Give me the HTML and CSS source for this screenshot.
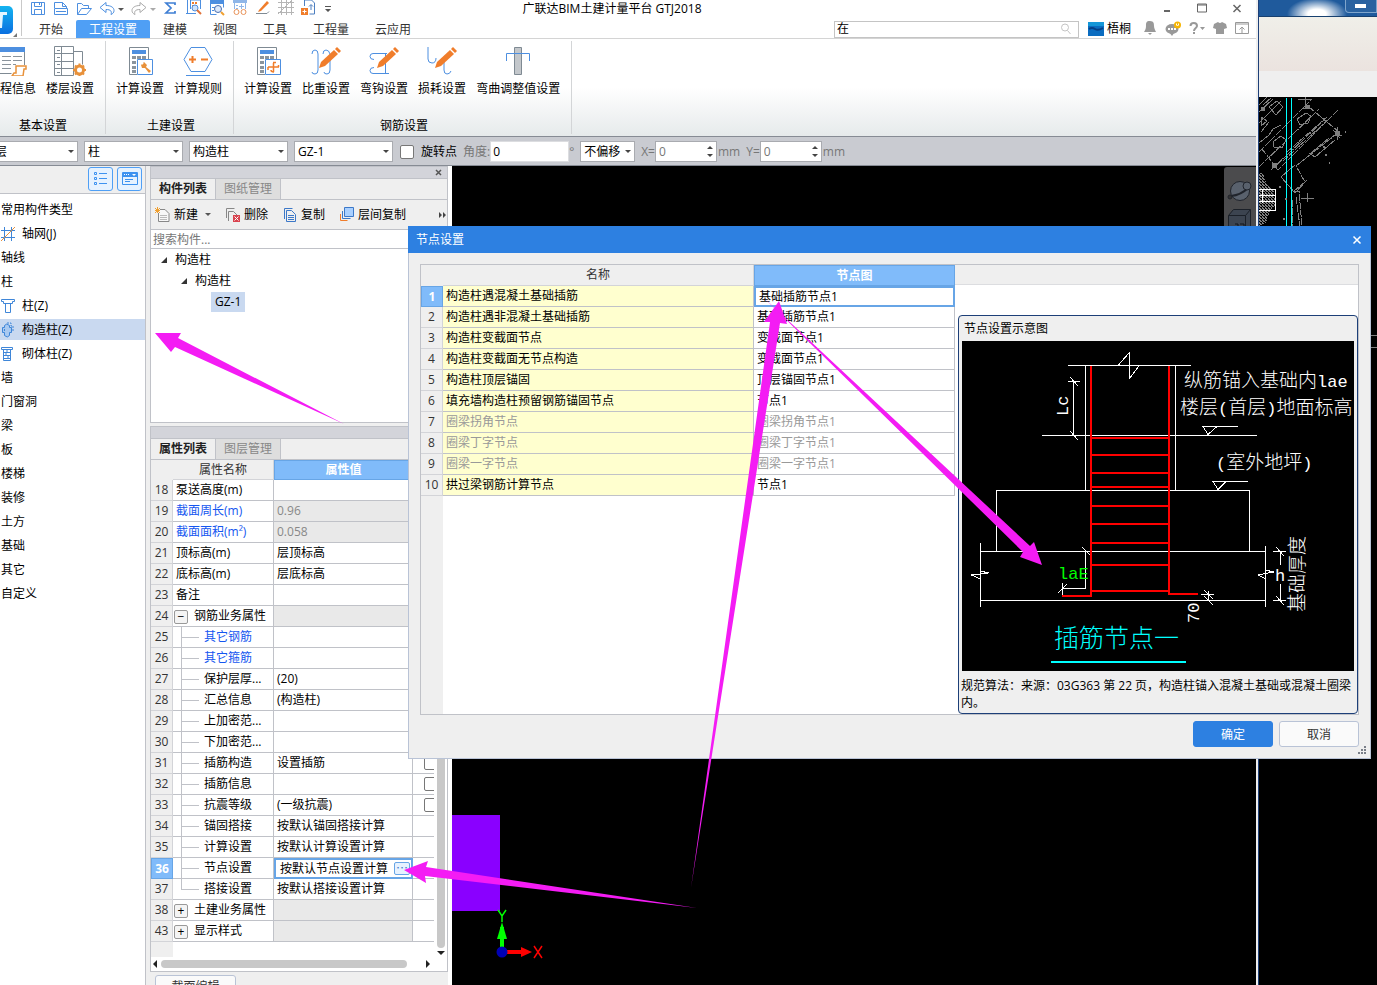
FILE: index.html
```html
<!DOCTYPE html>
<html lang="zh-CN">
<head>
    <meta charset="UTF-8">
    <title>广联达BIM土建计量平台 GTJ2018</title>
    <meta name="viewport" content="width=device-width, initial-scale=1">
    <link rel="stylesheet" href="styles.css">
</head>
<body>
<svg class="defs" aria-hidden="true">
    <symbol id="i-calc" viewBox="0 0 30 30">
        <path d="M4.500 1.500h19v13M12 28.500H4.500v-27" fill="none" stroke="#7f8a93"/>
        <path d="M7 4h14v4H7z" fill="#4d8fe0"/>
        <path d="M7 10h4v3H7zM12 10h4v3h-4zM17 10h4v3h-4zM7 15h4v3H7zM7 20h4v3H7zM7 24h4v3H7z" fill="#8b949c"/>
    </symbol>
    <symbol id="i-pencil" viewBox="0 0 30 30">
        <path d="M8 22l2-6L23 4l4 4L14 20z" fill="#f07d2b"/>
        <path d="M24 3l2-2 4 4-2 2z" fill="#f07d2b"/>
    </symbol>
</svg>

<div class="screen">
    <div class="app">
        <header class="header">
            <div class="logo">
                <svg width="22" height="40" viewBox="0 0 22 40">
                    <defs><linearGradient id="lg" x2="0" y2="1"><stop offset="0" stop-color="#14b4f0"/><stop offset="1" stop-color="#0a6fe0"/></linearGradient></defs>
                    <rect x="-16" y="6" width="29" height="28" rx="5" fill="url(#lg)"/>
                    <path d="M0 12h7v3H3l-1 13H0z" fill="#e6f6ff"/>
                    <path d="M17 33v4h-4z" fill="#777"/>
                    <path d="M21.500 0v36" stroke="#c9c9c9"/>
                </svg>
            </div>
            <div class="header-main">
                <div class="titlebar">
                    <div class="quick">
                        <button title="保存"><svg width="16" height="18" viewBox="0 0 16 18" fill="none" stroke="#4d8fe0"><path d="M1.500 2.500h13v12h-13zM4.500 2.500v4h7v-4M4.500 14.500v-5h7v5M9.500 3v2"/></svg></button>
                        <button title="打印"><svg width="16" height="18" viewBox="0 0 16 18" fill="none" stroke="#4d8fe0"><path d="M1.500 8V2.500h8l4 4V8M1.500 14.500v-6h13v6zM9.500 2.500v4h4M3 11.500h10"/></svg></button>
                        <button title="打开"><svg width="16" height="18" viewBox="0 0 16 18" fill="none" stroke="#4d8fe0"><path d="M1.500 14.500v-11h4l2 2h5v3M1.500 14.500l4-6h10l-5 6z"/></svg></button>
                        <button title="撤销"><svg width="16" height="18" viewBox="0 0 16 18" fill="none" stroke="#4d8fe0"><path d="M1 7.500l6-5v3c5 0 8 2 8 5 0 2-1 3-3 4 1-3 0-5-5-5v3z"/></svg><i class="caret"></i></button>
                        <button title="恢复"><svg width="16" height="18" viewBox="0 0 16 18" fill="none" stroke="#aaa"><path d="M15 7.500l-6-5v3c-5 0-8 2-8 5 0 2 1 3 3 4-1-3 0-5 5-5v3z"/></svg><i class="caret dim"></i></button>
                        <button title="汇总计算"><svg width="16" height="18" viewBox="0 0 16 18" fill="none" stroke="#3f7fd4" stroke-width="1.700"><path d="M12 5V3H3l5 5-5 5h9v-2"/></svg></button>
                        <button title="查看"><svg width="16" height="18" viewBox="0 0 16 18" fill="none" stroke="#4d8fe0"><path d="M0 13.500h10M1.500 13V0M4.500 9V0h10v9"/><path d="M6 2h2v2H6zM9 2h2v2H9zM6 5h2v2H6z" fill="#f07d2b" stroke="none"/><circle cx="9" cy="8" r="3" fill="#cfe2fa"/><path d="M11 10l4 4" stroke="#e0723a" stroke-width="2"/></svg></button>
                        <button title="查询"><svg width="16" height="18" viewBox="0 0 16 18" fill="none" stroke="#4d8fe0"><path d="M1.500 14.500V1.500h13v6M1.500 14.500h6M3 7.500h3M3 10.500h2"/><path d="M1 0h14v4H1z" fill="#4d8fe0" stroke="none"/><circle cx="9" cy="9" r="3.500" fill="#dce9fb" stroke="#4a6fb0"/><path d="M12 12l3 3" stroke="#f0a030" stroke-width="2"/></svg></button>
                        <button title="核对"><svg width="16" height="18" viewBox="0 0 16 18" fill="none" stroke="#8fb6e8"><path d="M1 0h14v3H1z" fill="#8fb6e8" stroke="none"/><path d="M2.500 9V1.500h11V9M7 6.500h5M9.500 4v5M4 5.500h2M4 8.500h2"/><circle cx="4.500" cy="12" r="2.500" stroke="#e8935a"/><circle cx="11.500" cy="12" r="2.500" stroke="#e8935a"/></svg></button>
                        <button title="绘制"><svg width="16" height="18" viewBox="0 0 16 18"><path d="M4 10l8-9 2 2-8 8-3 1z" fill="#f07d2b"/><path d="M1 13.500h11l2-2" fill="none" stroke="#7f8a93"/></svg></button>
                        <button title="轴网"><svg width="16" height="18" viewBox="0 0 16 18" fill="none" stroke="#b5b5b5"><path d="M3.500 0v15M8.500 0v15M13.500 0v15M0 2.500h16M0 7.500h16M0 12.500h16M0 14L14 0"/></svg></button>
                        <button title="导出"><svg width="16" height="18" viewBox="0 0 16 18" fill="none" stroke="#4d7fc0"><path d="M3.500 6V0h7l3 3v11h-5M8 6.500l2-2 2 2M10 5v5"/><path d="M0 8h7v7H0z" fill="#f07d2b" stroke="none"/><path d="M3.500 9.500v4M1.500 11.500h4" stroke="#fff"/></svg></button>
                        <button title="自定义"><svg width="8" height="18" viewBox="0 0 8 18"><path d="M1 6h6v1H1zM1 9h6l-3 3z" fill="#555"/></svg></button>
                    </div>
                    <h1 class="title">广联达BIM土建计量平台 GTJ2018</h1>
                    <div class="winbtns">
                        <button title="最小化"><svg width="10" height="12"><path d="M2 9h6v2H2z" fill="#666"/></svg></button>
                        <button title="最大化"><svg width="10" height="12"><path d="M.5 3h9v8h-9zM.5 4h9" fill="none" stroke="#666"/></svg></button>
                        <button title="关闭"><svg width="10" height="12"><path d="M1.500 4l7 7M8.500 4l-7 7" stroke="#666" stroke-width="1.500"/></svg></button>
                    </div>
                </div>
                <div class="menubar">
                    <nav class="tabs">
                        <a href="#">开始</a>
                        <a href="#" class="active">工程设置</a>
                        <a href="#">建模</a>
                        <a href="#">视图</a>
                        <a href="#">工具</a>
                        <a href="#">工程量</a>
                        <a href="#">云应用</a>
                    </nav>
                    <label class="search">
                        <input type="text" value="在" aria-label="搜索">
                        <svg width="14" height="14" viewBox="0 0 14 14" fill="none" stroke="#c4c4c4"><circle cx="6" cy="5.500" r="3.500"/><path d="M8.500 8.500l3 3.500"/></svg>
                    </label>
                    <div class="user">
                        <svg width="16" height="14" viewBox="0 0 16 14"><path d="M0 0h16v14H0z" fill="#0a6cc0"/><path d="M0 0h16v4H0z" fill="#1496d8"/><path d="M1 7q3-2 6 0t8-1" fill="none" stroke="#053f86" stroke-width="2"/></svg>
                        <span>梧桐</span>
                    </div>
                    <div class="tools">
                        <button title="通知"><svg width="14" height="16" viewBox="0 0 14 16" fill="#999"><path d="M7 0c4 0 4 3 4 5s1 4 2 6H1c1-2 2-3 2-6s0-5 4-5zM5 12h4l-2 2z"/></svg></button>
                        <button title="消息"><svg width="16" height="16" viewBox="0 0 16 16"><ellipse cx="7" cy="8" rx="6.500" ry="5" fill="#999"/><path d="M4 11l3 4 2-3z" fill="#999"/><path d="M3 7h2v2H3zM6 7h2v2H6zM9 7h2v2H9z" fill="#fff"/><circle cx="12.500" cy="4" r="3.500" fill="#f7b500"/><path d="M11.500 2.500v1.500q1 2 2 0V2.500" fill="none" stroke="#fff"/></svg></button>
                        <button title="帮助"><svg width="16" height="16" viewBox="0 0 16 16"><path d="M1.500 5c0-4 6.500-4 6.500 0 0 2-3 2-3 5" fill="none" stroke="#999" stroke-width="2"/><path d="M4 11h2v2H4zM11 6h5l-2.500 3z" fill="#999"/></svg></button>
                        <button title="皮肤"><svg width="14" height="16" viewBox="0 0 14 16"><path d="M1 3l4-2q2 2 4 0l4 2 1 4-3 1v5H3V8L0 7z" fill="#999"/></svg></button>
                        <button title="折叠"><svg width="14" height="16" viewBox="0 0 14 16" fill="none" stroke="#999"><path d="M.5 1.500h13v11H.5zM1 3h12M7 12V6M4.500 8.500L7 6l2.500 2.500"/></svg></button>
                    </div>
                </div>
            </div>
        </header>

        <section class="ribbon">
            <div class="group first">
                <div class="items">
                    <button class="item"><svg width="30" height="30" viewBox="0 0 30 30"><path d="M0 1h28v5H0z" fill="#4d8fe0"/><path d="M27.500 6v13M2.500 6v21.500h12" fill="none" stroke="#7f8a93"/><path d="M5 10.500h9M5 14.500h9M5 18.500h9M5 22.500h9M16 10.500h9M16 14.500h9M16 18.500h3" stroke="#8b949c"/><path d="M19 20h10v3h-2l-1 7H15l2-3h2z" fill="#fff" stroke="#e8913a" stroke-width="1.500"/></svg>工程信息</button>
                    <button class="item"><svg width="32" height="30" viewBox="0 0 32 30" fill="none" stroke="#7f8a93"><path d="M.5.5h19v29H.5zM.5 7.500h19M.5 15.500h19M.5 22.500h19M7.500 0v30M3 4.500h3M3 11.500h3M3 18.500h3M3 26.500h3M19.500 5.500h9v13"/><circle cx="25.500" cy="24" r="4" stroke="#e8913a" stroke-width="3" fill="#fff"/><path d="M25.500 17.500v2M25.500 28.500v2M19 24h2M30 24h2M21 19.500l1.500 1.500M30 19.500L28.500 21M21 28.500l1.500-1.500M30 28.500L28.500 27" stroke="#e8913a" stroke-width="2"/></svg>楼层设置</button>
                </div>
                <div class="group-name">基本设置</div>
            </div>
            <div class="group">
                <div class="items">
                    <button class="item"><svg width="30" height="30" viewBox="0 0 30 30"><use href="#i-calc"/><path d="M12.500 13.500h15v15h-15z" fill="#fff" stroke="#4d8fe0"/><path d="M16 19l3-3 3 3-1 2 5 4-2 2-4-5-3 0z" fill="#e8913a"/><path d="M15 15l3 3" stroke="#fff" stroke-width="2"/></svg>计算设置</button>
                    <button class="item"><svg width="30" height="30" viewBox="0 0 30 30"><path d="M8 1.500h14l7 12-7 12H8l-7-12z" fill="none" stroke="#4d8fe0"/><path d="M3 29.500h24" stroke="#4d8fe0"/><path d="M6 13.500h7M9.500 10v7M18 13.500h7" stroke="#f07d2b" stroke-width="2"/></svg>计算规则</button>
                </div>
                <div class="group-name">土建设置</div>
            </div>
            <div class="group">
                <div class="items">
                    <button class="item"><svg width="30" height="30" viewBox="0 0 30 30"><use href="#i-calc"/><path d="M12.500 13.500h15v15h-15z" fill="#fff" stroke="#4d8fe0"/><path d="M15 21h11M20.500 17v9M20 16.500h3M21 26q-3 0-3-2M15 21v3M25.500 21v-2" fill="none" stroke="#f07d2b" stroke-width="1.500"/></svg>计算设置</button>
                    <button class="item"><svg width="30" height="30" viewBox="0 0 30 30"><path d="M1 8q0-4 3-4t3 4v16q0 4-3 4t-3-2M12 8q0-4 3-4t4 4v16q0 4-3 4t-3-2" fill="none" stroke="#4d8fe0"/><use href="#i-pencil"/></svg>比重设置</button>
                    <button class="item"><svg width="30" height="30" viewBox="0 0 30 30"><path d="M18 7.500H4q-3 0-3 3t4 3M16.500 8v20M20 27.500H4q-3 0-3-3t4-3" fill="none" stroke="#4d8fe0"/><use href="#i-pencil"/></svg>弯钩设置</button>
                    <button class="item"><svg width="30" height="30" viewBox="0 0 30 30"><path d="M1 1v12q0 4 4 4t4-5M17 12v12q0 4 3 4t4-3" fill="none" stroke="#4d8fe0"/><use href="#i-pencil"/></svg>损耗设置</button>
                    <button class="item"><svg width="30" height="30" viewBox="0 0 30 30"><path d="M11.500 1.500h7v27h-7z" fill="#c3c7cb" stroke="#7f8a93"/><path d="M3.500 15V7.500h23V15" fill="none" stroke="#4d8fe0"/></svg>弯曲调整值设置</button>
                </div>
                <div class="group-name">钢筋设置</div>
            </div>
        </section>

        <section class="options">
            <span class="pick"><select aria-label="楼层"><option>首层</option></select></span>
            <span class="pick"><select aria-label="构件分类"><option>柱</option></select></span>
            <span class="pick"><select aria-label="构件类型"><option>构造柱</option></select></span>
            <span class="pick"><select aria-label="构件"><option>GZ-1</option></select></span>
            <label class="check"><input type="checkbox">旋转点</label>
            <label class="angle">角度:<input type="text" value="0"><i>°</i></label>
            <span class="pick small"><select aria-label="偏移"><option>不偏移</option></select></span>
            <label class="spin">X=<span><input type="text" value="0"></span>mm</label>
            <label class="spin">Y=<span><input type="text" value="0"></span>mm</label>
        </section>

        <main class="work">
            <aside class="side">
                <div class="side-head">
                    <button title="列表"><svg width="14" height="16" viewBox="0 0 14 16" fill="none" stroke="#3d92f0"><path d="M.5 1.500h2v2h-2zM.5 6.500h2v2h-2zM.5 11.500h2v2h-2zM5 2.500h8M5 7.500h8M5 12.500h8"/></svg></button>
                    <button title="面板"><svg width="16" height="16" viewBox="0 0 16 16"><path d="M.5 1.500h15v12H.5z" fill="none" stroke="#3d92f0"/><path d="M1 1h14v5H1z" fill="#3d92f0"/><path d="M2 3h1v1H2zM4 3h1v1H4zM6 3h1v1H6zM10 3h4l-2 2z" fill="#fff"/><path d="M3 8.500h8M3 10.500h5" stroke="#3d92f0"/></svg></button>
                </div>
                <ul class="types">
                    <li>常用构件类型</li>
                    <li class="sub"><svg width="16" height="16" viewBox="0 0 16 16"><path d="M4.500 1v14M11.500 1v14M1 4.500h14M1 11.500h14" stroke="#3f86d8"/><path d="M1 15L15 1" stroke="#e8913a"/></svg>轴网(J)</li>
                    <li>轴线</li>
                    <li>柱</li>
                    <li class="sub"><svg width="16" height="16" viewBox="0 0 16 16" fill="none" stroke="#3f86d8"><path d="M1.500 1.500h13v2h-2v2h-9v-2h-2zM5.500 5.500v9h5v-9"/></svg>柱(Z)</li>
                    <li class="sub on"><svg width="16" height="16" viewBox="0 0 16 16" fill="none" stroke="#3f86d8"><path d="M4.500 3.500q2-3 5 0v2h2v5h-2v3q-2 3-5 0v-3h-2v-5h2z" fill="#a9c9f0"/><path d="M7 1h4v3h2v6M4.500 7v3" stroke-dasharray="2 1"/></svg>构造柱(Z)</li>
                    <li class="sub"><svg width="16" height="16" viewBox="0 0 16 16" fill="none" stroke="#3f86d8"><path d="M1.500 1.500h11v2h-11zM3.500 3.500v11h7v-11M4 6.500h6M4 9.500h6M4 12.500h6M7 4v2M6 7v2M8 10v2"/></svg>砌体柱(Z)</li>
                    <li>墙</li>
                    <li>门窗洞</li>
                    <li>梁</li>
                    <li>板</li>
                    <li>楼梯</li>
                    <li>装修</li>
                    <li>土方</li>
                    <li>基础</li>
                    <li>其它</li>
                    <li>自定义</li>
                </ul>
            </aside>

            <div class="panels">
                <section class="panel parts">
                    <div class="strip"><button title="关闭"><svg width="8" height="8"><path d="M1 1l5 5M6 1L1 6" stroke="#555" stroke-width="1.500"/></svg></button></div>
                    <div class="ptabs"><a href="#" class="active">构件列表</a><a href="#">图纸管理</a></div>
                    <div class="ptools">
                        <button><svg width="16" height="16" viewBox="0 0 16 16"><path d="M5 2.500h5l4 4v8H3.500V6" fill="#f8f8f8" stroke="#888"/><path d="M5 8.500h7M5 10.500h7M5 12.500h7" stroke="#bbb"/><path d="M0 1l5 5M5 1L0 6M2.500 0v6M0 3.500h5" stroke="#f0a030"/></svg>新建<i class="caret"></i></button>
                        <button><svg width="16" height="16" viewBox="0 0 16 16"><path d="M1.500 11V1.500h8M3.500 14V4.500h5l4 4" fill="none" stroke="#888"/><path d="M8 8h7v7H8z" fill="#d9434f"/><path d="M9.500 9.500l4 4M13.500 9.500l-4 4" stroke="#fff"/></svg>删除</button>
                        <button><svg width="16" height="16" viewBox="0 0 16 16"><path d="M2.500 12V1.500h8M4.500 14.500v-11h5l4 4v7z" fill="none" stroke="#3c78c8"/><path d="M6 8.500h6M6 10.500h6M6 12.500h6" stroke="#3c78c8"/></svg>复制</button>
                        <button><svg width="16" height="16" viewBox="0 0 16 16"><path d="M5.500.5h9v9h-9z" fill="#a9d0ff" stroke="#3c78c8"/><path d="M3.500 4v7.500h8" fill="none" stroke="#3c78c8"/><path d="M1.500 7v6.500h7" fill="none" stroke="#f07d2b"/></svg>层间复制</button>
                        <button class="more" title="更多"><svg width="8" height="8"><path d="M0 1l3 3-3 3zM4 1l3 3-3 3z" fill="#444"/></svg></button>
                    </div>
                    <input class="filter" type="text" placeholder="搜索构件..." aria-label="搜索构件">
                    <ul class="tree">
                        <li><i class="twist"></i>构造柱</li>
                        <li class="l2"><i class="twist"></i>构造柱</li>
                        <li class="l3"><span>GZ-1</span></li>
                    </ul>
                </section>

                <section class="panel props">
                    <div class="strip"></div>
                    <div class="ptabs"><a href="#" class="active">属性列表</a><a href="#">图层管理</a></div>
                    <div class="scroll">
                        <div class="clip">
                            <table class="grid">
                                <colgroup><col class="c-no"><col class="c-name"><col class="c-val"><col class="c-add"></colgroup>
                                <thead><tr><td class="corner"></td><th>属性名称</th><th class="sel">属性值</th><th></th></tr></thead>
                                <tbody>
                                <tr><th>18</th><td>泵送高度(m)</td><td></td><td></td></tr>
                                <tr><th>19</th><td class="blue">截面周长(m)</td><td class="ro">0.96</td><td></td></tr>
                                <tr><th>20</th><td class="blue">截面面积(m²)</td><td class="ro">0.058</td><td></td></tr>
                                <tr><th>21</th><td>顶标高(m)</td><td>层顶标高</td><td></td></tr>
                                <tr><th>22</th><td>底标高(m)</td><td>层底标高</td><td></td></tr>
                                <tr><th>23</th><td>备注</td><td></td><td></td></tr>
                                <tr><th>24</th><td class="fold"><button>−</button>钢筋业务属性</td><td class="ro"></td><td></td></tr>
                                <tr><th>25</th><td class="kid blue">其它钢筋</td><td></td><td></td></tr>
                                <tr><th>26</th><td class="kid blue">其它箍筋</td><td></td><td></td></tr>
                                <tr><th>27</th><td class="kid">保护层厚...</td><td>(20)</td><td></td></tr>
                                <tr><th>28</th><td class="kid">汇总信息</td><td>(构造柱)</td><td></td></tr>
                                <tr><th>29</th><td class="kid">上加密范...</td><td></td><td></td></tr>
                                <tr><th>30</th><td class="kid">下加密范...</td><td></td><td></td></tr>
                                <tr><th>31</th><td class="kid">插筋构造</td><td>设置插筋</td><td class="tick"><input type="checkbox" aria-label="附加 插筋构造"></td></tr>
                                <tr><th>32</th><td class="kid">插筋信息</td><td></td><td class="tick"><input type="checkbox" aria-label="附加 插筋信息"></td></tr>
                                <tr><th>33</th><td class="kid">抗震等级</td><td>(一级抗震)</td><td class="tick"><input type="checkbox" aria-label="附加 抗震等级"></td></tr>
                                <tr><th>34</th><td class="kid">锚固搭接</td><td>按默认锚固搭接计算</td><td></td></tr>
                                <tr><th>35</th><td class="kid">计算设置</td><td>按默认计算设置计算</td><td></td></tr>
                                <tr class="cur"><th>36</th><td class="kid">节点设置</td><td class="edit"><div>按默认节点设置计算<button title="选择">⋯</button></div></td><td></td></tr>
                                <tr><th>37</th><td class="kid last">搭接设置</td><td>按默认搭接设置计算</td><td></td></tr>
                                <tr><th>38</th><td class="fold"><button>+</button>土建业务属性</td><td class="ro"></td><td></td></tr>
                                <tr><th>43</th><td class="fold"><button>+</button>显示样式</td><td class="ro"></td><td></td></tr>
                                </tbody>
                            </table>
                        </div>
                        <div class="vbar"><i></i><b></b></div>
                    </div>
                    <div class="hbar"><b></b><i></i><b class="r"></b></div>
                </section>
                <button class="section-edit">截面编辑</button>
            </div>

            <div class="canvas">
                <svg class="model" width="110" height="170" viewBox="0 0 110 170">
                    <path d="M0 0h48v96H0z" fill="#8a00ff"/>
                    <path d="M48 112h4v26h-4z" fill="#0f0"/><path d="M45 124l5-17 5 17z" fill="#0f0"/>
                    <path d="M50 135h20v4H50z" fill="#f00"/><path d="M69 132l11 5-11 5z" fill="#f00"/>
                    <circle cx="50" cy="137" r="5.500" fill="#0000b4"/>
                    <path d="M46 95l4 6 4-6M50 101v6" fill="none" stroke="#0f0" stroke-width="1.500"/>
                    <path d="M82 131l8 12M90 131l-8 12" stroke="#f00" stroke-width="1.500"/>
                </svg>
                <div class="viewbar">
                    <svg width="32" height="60" viewBox="0 0 32 60">
                        <circle cx="16" cy="24" r="9.500" fill="#59616d" stroke="#20242c"/><path d="M7 29q10-1 17-8" fill="none" stroke="#20242c" stroke-width="2"/><circle cx="23" cy="19" r="4" fill="#59616d" stroke="#20242c"/><circle cx="6" cy="30" r="2" fill="#333" stroke="#20242c"/>
                        <path d="M4.500 48.500l5-6h17v22h-22zM4.500 48.500h17v20M21.500 48.500l5-6" fill="#3c4450" stroke="#1b2028"/><path d="M11 57h3v4M16 57h4v4" fill="none" stroke="#11151b"/>
                    </svg>
                </div>
            </div>
        </main>
    </div>

    <div class="back">
        <div class="back-title"><button title="最小化"></button></div>
        <div class="back-ribbon"></div>
        <div class="back-bar"></div>
        <div class="back-canvas">
            <svg width="118" height="260" viewBox="0 0 118 260" fill="none" stroke="#808080" shape-rendering="crispEdges">
                <defs><pattern id="dots" width="3" height="3" patternUnits="userSpaceOnUse"><path d="M0 0h2v1H0zM1 1h2v1H1zM0 2h1v1H0z" fill="#808080" stroke="none"/></pattern></defs>
                <path d="M0 76h4l4 12 7 6 1 14-6 8-3 10-7 4z" fill="url(#dots)" stroke="none"/>
                <path d="M0 55L52 3M0 70L60 12M3 52L19 73L80 12M24 64L72 20M28 55L68 20M12 73L62 26M50 10L80 35L37 69L46 85L35 94M35 94l5 0 3 36M37 100l4 30M33 103v27" stroke-dasharray="7 1"/>
                <path d="M0 8L8 0M0 15L14 2M0 26l22-22M4 8L12 1M10 10l8-6 6 6-7 8zM2 20l6 4-6 5zM38 22l9-6 5 3-3 7-8 2zM14 45l8-6 5 4-4 8-8-1zM22 80l14-12M22 80l14 16 12-13M52 56l18-15M50 56l6 4 20-17M0 46l10-8 4-6 8-4M2 35l8-10"/>
                <path d="M46 0v8M39 2h14M42 101h13M48 96v9M43 11l10 0M74 33l7 8M78 30v13M74 38h9"/>
                <path d="M2 10h4v4H2zM46 8h5v3h-5zM76 34h5v4h-5zM13 66h5v5h-5zM46 84h4" stroke="none" fill="#808080"/>
                <path d="M0 92.500h16v21H0M0 98.500h16M0 104.500h16M3.500 93v13" stroke="#fff"/>
                <path d="M27.500 1v130M32.500 1v130" stroke="#00ffff"/>
                <path d="M86 35h1M70 66h1M66 58h2M64 50h2M20 90h2M26 102h2M24 122h2" stroke-width="2"/>
                <path d="M112 238.500h6M112 250.500h6"/>
            </svg>
        </div>
    </div>

    <section class="dialog" role="dialog" aria-label="节点设置">
        <header class="dlg-title"><h2>节点设置</h2><button title="关闭"><svg width="10" height="10"><path d="M1.500 1.500l7 7M8.500 1.500l-7 7" stroke="#fff" stroke-width="1.500"/></svg></button></header>
        <div class="dlg-body">
            <div class="nodes">
                <table class="grid">
                    <colgroup><col class="c-no"><col class="c-node"><col class="c-pic"></colgroup>
                    <thead><tr><td class="corner"></td><th>名称</th><th class="sel">节点图</th></tr></thead>
                    <tbody>
                    <tr class="cur"><th>1</th><td>构造柱遇混凝土基础插筋</td><td class="edit">基础插筋节点1</td></tr>
                    <tr><th>2</th><td>构造柱遇非混凝土基础插筋</td><td>基础插筋节点1</td></tr>
                    <tr><th>3</th><td>构造柱变截面节点</td><td>变截面节点1</td></tr>
                    <tr><th>4</th><td>构造柱变截面无节点构造</td><td>变截面节点1</td></tr>
                    <tr><th>5</th><td>构造柱顶层锚固</td><td>顶层锚固节点1</td></tr>
                    <tr><th>6</th><td>填充墙构造柱预留钢筋锚固节点</td><td>节点1</td></tr>
                    <tr class="off"><th>7</th><td>圈梁拐角节点</td><td>圈梁拐角节点1</td></tr>
                    <tr class="off"><th>8</th><td>圈梁丁字节点</td><td>圈梁丁字节点1</td></tr>
                    <tr class="off"><th>9</th><td>圈梁一字节点</td><td>圈梁一字节点1</td></tr>
                    <tr><th>10</th><td>拱过梁钢筋计算节点</td><td>节点1</td></tr>
                    </tbody>
                </table>
            </div>
            <div class="preview">
                <div class="preview-head"></div>
                <fieldset class="figure">
                    <div class="figure-name">节点设置示意图</div>
                    <svg class="drawing" viewBox="962 341 392 330">
                        <path d="M962 341h392v330H962z" fill="#000"/>
                        <g fill="none" stroke="#fff" shape-rendering="crispEdges">
                            <path d="M1068 365.500h123M1118.500 365l10.500-12v26l10-13M1085.500 365v125M1175.500 365v125M1042 435.500h215"/>
                            <path d="M1073.500 380v56M1068 381.500h12M1070 377l8 9M1070 431l8 9"/>
                            <path d="M996.500 551v-60.500h253v61M980 551.500h286M980 600.500h286M980.500 543v64M1265.500 546v61"/>
                            <path d="M980.500 567v4l8 2-17 2 9 4M1265.500 570l8 2-15 3 7 4"/>
                            <path d="M1238 426.500h-35l5 8 9-8M1248 481.500h-35l5 8 8-8"/>
                            <path d="M1280.500 551v14M1280.500 584v17M1273 551.500h13M1273 600.500h13M1276 547l8 9M1276 596l8 9"/>
                            <path d="M1085.500 551v37.500h-23M1062.500 583v13M1058 593l9-9M1082 547l9 9"/>
                            <path d="M1201 594.500h13M1208.500 591v9M1204 590l9 9M1204 596l9 9"/>
                        </g>
                        <path d="M1091 366v230h-29M1169 366v228h29M1091 438h78M1091 455h78M1091 473h78M1091 487h78M1091 506h78M1091 524h78M1091 543h78M1091 565h78M1091 591h78" fill="none" stroke="#f00" stroke-width="2"/>
                        <path d="M1051 662h135" stroke="#0ff" stroke-width="2"/>
                        <g class="cad">
                            <text x="1184" y="387">纵筋锚入基础内<tspan class="lat">lae</tspan></text>
                            <text x="1180" y="414">楼层<tspan class="lat">(</tspan>首层<tspan class="lat">)</tspan>地面标高</text>
                            <text x="1216" y="469"><tspan class="lat">(</tspan>室外地坪<tspan class="lat">)</tspan></text>
                            <text class="lat" transform="translate(1068 416) rotate(-90)">Lc</text>
                            <text class="lat" transform="translate(1199 623) rotate(-90)">70</text>
                            <text transform="translate(1304 612) rotate(-90)">基础厚度</text>
                            <text class="lat" x="1275" y="581">h</text>
                            <text class="lat green" x="1058" y="579">laE</text>
                            <text class="name" x="1054" y="647">插筋节点一</text>
                        </g>
                    </svg>
                    <p>规范算法：来源：03G363 第 22 页，构造柱锚入混凝土基础或混凝土圈梁内。</p>
                </fieldset>
            </div>
        </div>
        <footer class="dlg-foot">
            <button class="ok">确定</button>
            <button>取消</button>
        </footer>
        <svg class="grip" width="9" height="9"><path d="M6 0h2v2H6zM3 3h2v2H3zM6 3h2v2H6zM0 6h2v2H0zM3 6h2v2H3zM6 6h2v2H6z" fill="#7a7f88"/></svg>
    </section>

    <svg class="arrows" aria-hidden="true" fill="#f41cf4">
        <path d="M155 333h26l-3 5 166 86-169-77-4 5z"/>
        <path d="M404 870l24-9-2 6 271 41-272-32 1 7z"/>
        <path d="M779 301l8 23-7-1-89 565 79-566-6 0z"/>
        <path d="M763 297l267 249 4-4 8 23-22-8 3-5z"/>
    </svg>
</div>
</body>
</html>
```

FILE: styles.css
```css
*{
    box-sizing: border-box;
}
body{
    margin: 0;
    background: #000;
    color: #000;
    font: 12px/16px "Open Sans", "Noto Sans CJK SC", sans-serif;
}
button, input, select{
    font: inherit;
    color: inherit;
    margin: 0;
    padding: 0;
    border: 0;
    background: none;
}
h1, h2, p, ul, fieldset{
    margin: 0;
    padding: 0;
    border: 0;
    font-size: 12px;
    font-weight: normal;
    list-style: none;
}
a{
    color: inherit;
    text-decoration: none;
}
svg{
    display: block;
    flex: none;
}
.defs{
    position: absolute;
    width: 0;
    height: 0;
}
.caret{
    width: 0;
    border: 3px solid transparent;
    border-top-color: #555;
    border-bottom: 0;
}
.caret.dim{
    border-top-color: #aaa;
}
.screen{
    position: relative;
    display: grid;
    grid-template-columns: minmax(0, 1fr) 119px;
    height: 100vh;
    overflow: hidden;
}
.app{
    display: flex;
    flex-direction: column;
    min-height: 0;
    overflow: hidden;
    background: #fff;
    border-right: 2px solid #efefef;
}

/* header */
.header{
    display: flex;
    height: 39px;
    border-bottom: 1px solid #d4d4d4;
}
.logo{
    width: 26px;
    height: 38px;
    overflow: hidden;
}
.header-main{
    flex: 1;
}
.titlebar{
    display: flex;
    justify-content: space-between;
    height: 20px;
}
.quick{
    display: flex;
    gap: 7px;
    padding-left: 4px;
}
.quick button{
    display: flex;
    align-items: center;
    gap: 3px;
    height: 18px;
}
.title{
    padding: 1px 270px 0 0;
}
.winbtns{
    display: flex;
    align-items: flex-start;
    gap: 25px;
    padding: 1px 14px 0 0;
}
.menubar{
    display: flex;
    align-items: center;
    height: 18px;
}
.tabs{
    display: flex;
    flex: 1;
    color: #333;
}
.tabs a{
    height: 18px;
    padding: 2px 13px 0;
}
.tabs .active{
    background: #4f9ff5;
    color: #fff;
    border-radius: 2px 2px 0 0;
}
.search{
    display: flex;
    align-items: center;
    width: 245px;
    height: 17px;
    padding: 0 5px 0 2px;
    border: 1px solid #c4c4c4;
}
.search input{
    flex: 1;
    min-width: 0;
    height: 15px;
}
.user{
    display: flex;
    align-items: center;
    gap: 3px;
    margin-left: 9px;
}
.tools{
    display: flex;
    gap: 8px;
    padding: 0 7px 0 12px;
}

/* ribbon */
.ribbon{
    display: flex;
    height: 98px;
    padding: 2px 0;
    border-bottom: 1px solid #868b94;
    background: linear-gradient(#fff 50%, #e6eaeb);
}
.group{
    display: flex;
    flex-direction: column;
    justify-content: space-between;
    padding: 5px 6px 0 5px;
    border-right: 1px solid #d3d5d7;
}
.group.first{
    margin-left: -22px;
}
.items{
    display: flex;
}
.item{
    display: flex;
    flex-direction: column;
    align-items: center;
    gap: 5px;
    padding: 0 5px;
    white-space: nowrap;
}
.group-name{
    padding-left: 4px;
    text-align: center;
}

/* option bar */
.options{
    display: flex;
    align-items: center;
    gap: 6px;
    height: 29px;
    margin-left: -21px;
    padding-top: 1px;
    border-bottom: 1px solid #868b94;
    background: #c9cbd1;
    color: #777;
}
.options input, .options select{
    height: 21px;
    border: 1px solid #a9abb0;
    background: #fff;
    color: #000;
}
.pick{
    position: relative;
    color: #000;
}
.pick select{
    display: block;
    width: 99px;
    padding: 0 3px;
    appearance: none;
}
.pick.small select{
    width: 55px;
}
.pick::after{
    content: "";
    position: absolute;
    right: 4px;
    top: 9px;
    border: 3px solid transparent;
    border-top-color: #444;
    border-bottom: 0;
}
.options label{
    display: flex;
    align-items: center;
}
.check{
    gap: 7px;
    padding-left: 1px;
    color: #000;
}
.options .check input, .tick input{
    appearance: none;
    width: 14px;
    height: 14px;
    border: 1px solid #777;
    border-radius: 2px;
    background: #fff;
}
.options .angle input{
    width: 79px;
    padding: 0 2px;
    border-color: #dcdde0;
}
.angle i{
    width: 5px;
    font-style: normal;
}
.spin span{
    position: relative;
    padding-right: 1px;
}
.options .spin input{
    display: block;
    width: 62px;
    padding: 0 3px;
    color: #777;
}
.spin span::before, .spin span::after{
    content: "";
    position: absolute;
    right: 5px;
    top: 5px;
    border: 3px solid transparent;
    border-top: 0;
    border-bottom-color: #444;
}
.spin span::after{
    top: 13px;
    border-top: 3px solid #444;
    border-bottom: 0;
}

/* workspace */
.work{
    display: flex;
    flex: 1;
    min-height: 0;
}
.side{
    width: 146px;
    border-right: 1px solid #c0c2c8;
}
.side-head{
    display: flex;
    justify-content: flex-end;
    gap: 4px;
    height: 28px;
    padding: 1px 3px 0 0;
    border-bottom: 1px solid #c0c2c8;
    background: #efefef;
}
.side-head button{
    display: flex;
    align-items: center;
    justify-content: center;
    width: 25px;
    height: 24px;
    border: 1px solid #4f9ff5;
    border-radius: 3px;
    background: #e6f2ff;
}
.types{
    padding-top: 5px;
}
.types li{
    display: flex;
    align-items: center;
    gap: 6px;
    height: 21px;
    margin-bottom: 3px;
    padding-left: 1px;
}
.types .sub{
    padding-left: 0;
}
.types .on{
    background: #c9d9f0;
}
.panels{
    display: flex;
    flex-direction: column;
    width: 306px;
    padding-left: 4px;
    border-right: 4px solid #fff;
    background: #efefef;
}
.panel{
    display: flex;
    flex: none;
    flex-direction: column;
    width: 298px;
    border: 1px solid #c0c2c8;
    background: #fff;
}
.parts{
    height: 257px;
}
.strip{
    display: flex;
    align-items: center;
    justify-content: flex-end;
    height: 12px;
    padding-right: 4px;
    border-bottom: 1px solid #c0c2c8;
    background: #d3d4da;
}
.ptabs{
    display: flex;
    height: 21px;
    border-bottom: 1px solid #c0c2c8;
    background: #efefef;
}
.ptabs a{
    padding: 2px 8px;
    border-right: 1px solid #c0c2c8;
    background: #dedede;
    color: #888;
}
.ptabs .active{
    background: #efefef;
    color: #222;
    font-weight: bold;
}
.ptools{
    display: flex;
    gap: 14px;
    height: 30px;
    padding-left: 4px;
    border-bottom: 1px solid #c0c2c8;
    background: #efefef;
}
.ptools button{
    display: flex;
    align-items: center;
    gap: 3px;
    white-space: nowrap;
}
.ptools .caret{
    margin-left: 4px;
}
.ptools .more{
    margin-left: auto;
}
.filter{
    height: 19px;
    padding: 0 2px;
    border-bottom: 1px solid #c0c2c8;
}
.filter::placeholder{
    color: #777;
}
.tree li{
    display: flex;
    align-items: center;
    gap: 8px;
    height: 21px;
    padding-left: 10px;
}
.tree .l2{
    padding-left: 30px;
}
.tree .l3{
    padding-left: 60px;
}
.l3 span{
    padding: 2px 4px;
    background: #c9d9f0;
}
.twist{
    border: 3px solid #333;
    border-top-color: transparent;
    border-left-color: transparent;
}

/* tables */
.grid{
    table-layout: fixed;
    border-spacing: 0;
}
.grid tr{
    height: 21px;
}
.grid thead tr{
    height: 20px;
}
.grid th, .grid td{
    height: inherit;
    padding: 0 3px;
    border-right: 1px solid #c0c2c8;
    border-bottom: 1px solid #c0c2c8;
    white-space: nowrap;
    overflow: hidden;
    text-align: left;
}
.grid th{
    padding: 0;
    border-color: #d3d4d8;
    background: #efefef;
    color: #333;
    font-weight: normal;
    text-align: center;
}
.grid .corner{
    border: 0;
}
.grid .sel, .grid .cur th{
    border: 1px solid #67a5e6;
    background: #80bbfa;
    color: #fff;
    font-weight: bold;
}
.grid .edit{
    border: 2px solid #67a5e6;
}
.grid .blue{
    color: #1456f0;
}
.grid .ro{
    background: #e9e9e9;
    color: #888;
}
.c-no{
    width: 22px;
}

/* property list */
.props{
    height: 546px;
    margin-top: 3px;
}
.scroll{
    display: flex;
    flex: 1;
    min-height: 0;
}
.clip{
    width: 283px;
    overflow: hidden;
    background: linear-gradient(90deg, #efefef 22px, #fff 22px);
}
.props .grid{
    width: 300px;
}
.c-name{
    width: 101px;
}
.c-val{
    width: 139px;
}
.grid .fold{
    padding-left: 1px;
}
.fold button{
    width: 14px;
    height: 14px;
    margin-right: 6px;
    border: 1px solid #999;
    border-radius: 2px;
    background: #f4f4f4;
    line-height: 12px;
    vertical-align: middle;
}
.grid .kid{
    padding-left: 31px;
    background: linear-gradient(#c0c2c8, #c0c2c8) 8px 0 / 1px 100% no-repeat, linear-gradient(#c0c2c8, #c0c2c8) 8px 10px / 18px 1px no-repeat;
}
.grid .last{
    background-size: 1px 10px, 18px 1px;
}
.grid .tick{
    padding-left: 11px;
}
.tick input{
    display: block;
}
.edit div{
    display: flex;
    align-items: center;
    justify-content: space-between;
}
.edit button{
    width: 16px;
    height: 13px;
    border: 1px solid #67a5e6;
    border-radius: 2px;
    background: #e6f2ff;
    color: #3c78c8;
    line-height: 10px;
}
.props .edit{
    padding: 0 1px 0 4px;
}
.vbar{
    display: flex;
    flex: 1;
    flex-direction: column;
    align-items: center;
    gap: 3px;
    padding-bottom: 2px;
}
.vbar i{
    flex: 1;
    width: 8px;
    border-radius: 4px;
    background: #c8c8c8;
}
.vbar b{
    border: 4px solid transparent;
    border-top-color: #222;
    border-bottom: 0;
}
.hbar{
    display: flex;
    align-items: center;
    gap: 4px;
    height: 14px;
    padding: 0 17px 0 2px;
}
.hbar i{
    width: 246px;
    height: 8px;
    border-radius: 4px;
    background: #c8c8c8;
}
.hbar b{
    border: 4px solid transparent;
    border-right-color: #222;
    border-left: 0;
}
.hbar .r{
    margin-left: auto;
    border: 4px solid transparent;
    border-left-color: #222;
    border-right: 0;
}
.section-edit{
    flex: none;
    width: 81px;
    height: 24px;
    margin: 3px 5px;
    border: 1px solid #b9c3d6;
    border-radius: 3px;
    background: #fafafa;
    color: #333;
}

.canvas{
    display: flex;
    flex: 1;
    justify-content: space-between;
    align-items: flex-end;
    min-width: 0;
    background: #000;
}
.viewbar{
    align-self: flex-start;
    width: 32px;
    height: 200px;
    margin-top: 1px;
    border-radius: 3px 0 0 0;
    background: #4b4b4d;
}

/* window behind */
.back{
    display: flex;
    flex-direction: column;
    border-left: 1px solid #1d3f78;
}
.back-title{
    display: flex;
    justify-content: flex-end;
    height: 17px;
    border-bottom: 1px solid #17406f;
    background: radial-gradient(ellipse 30px 16px at 58px 14px, #fff 30%, transparent), #1f5a9c;
}
.back-title button{
    width: 32px;
    height: 13px;
    border: 1px solid #7fa5cc;
    border-top: 0;
    border-radius: 0 0 0 4px;
    background: linear-gradient(#fff, #fff) 9px 4px / 11px 4px no-repeat, #2a62a0;
}
.back-ribbon{
    height: 54px;
    background: linear-gradient(#f0efe9, #ebe3df);
}
.back-bar{
    height: 26px;
    background: #efefef;
}
.back-canvas{
    flex: 1;
    background: #000;
}

/* dialog */
.dialog{
    position: absolute;
    left: 408px;
    right: 6px;
    top: 226px;
    display: flex;
    flex-direction: column;
    height: 533px;
    border: 1px solid #b9c3d6;
    border-top: 0;
    background: #efefef;
}
.dlg-title{
    display: flex;
    flex: none;
    align-items: center;
    justify-content: space-between;
    height: 27px;
    margin: 0 -1px;
    padding: 0 9px 0 8px;
    background: #2d80e1;
    color: #fff;
}
.dlg-body{
    display: flex;
    flex: 1;
    min-height: 0;
    margin: 11px 11px 0;
    border: 1px solid #c0c2c8;
}
.nodes{
    flex: 1;
    background: linear-gradient(90deg, #efefef 22px, #fff 22px);
}
.nodes .grid{
    width: 100%;
}
.nodes thead tr{
    height: 21px;
}
.c-pic{
    width: 201px;
}
.nodes td:nth-child(2){
    background: #ffffcf;
}
.nodes .off td{
    color: #999;
}
.preview{
    display: flex;
    flex-direction: column;
    width: 403px;
    padding-left: 3px;
    background: #fff;
}
.preview-head{
    height: 20px;
    margin-left: -3px;
    border-bottom: 1px solid #dcdde0;
    background: #efefef;
}
.figure{
    flex: 1;
    min-height: 0;
    margin-top: 30px;
    padding: 5px 3px 0;
    border: 1px solid #1d3f78;
    border-radius: 4px;
    background: #efefef;
}
.figure-name{
    height: 20px;
    padding-left: 2px;
}
.figure p{
    padding-top: 6px;
    margin-right: -3px;
    margin-left: -1px;
    line-height: 17px;
}
.drawing{
    width: 100%;
}
.cad{
    fill: #fff;
    font-family: "Noto Sans CJK SC", sans-serif;
    font-size: 19px;
    font-weight: 300;
}
.cad .lat{
    font-family: "Liberation Mono", monospace;
    font-size: 17px;
}
.cad .green{
    fill: #0f0;
}
.cad .name{
    fill: #0ff;
    font-size: 25px;
}
.dlg-foot{
    display: flex;
    flex: none;
    justify-content: flex-end;
    gap: 6px;
    padding: 6px 11px 11px;
}
.dlg-foot button{
    width: 80px;
    height: 26px;
    padding-top: 1px;
    border: 1px solid #b9c3d6;
    border-radius: 3px;
    background: #fafafa;
    color: #333;
}
.dlg-foot .ok{
    border-color: #2d80e1;
    background: #2d80e1;
    color: #fff;
}
.grip{
    position: absolute;
    right: 3px;
    bottom: 3px;
}
.arrows{
    position: absolute;
    left: 0;
    top: 0;
    width: 100%;
    height: 100%;
    pointer-events: none;
}
```
